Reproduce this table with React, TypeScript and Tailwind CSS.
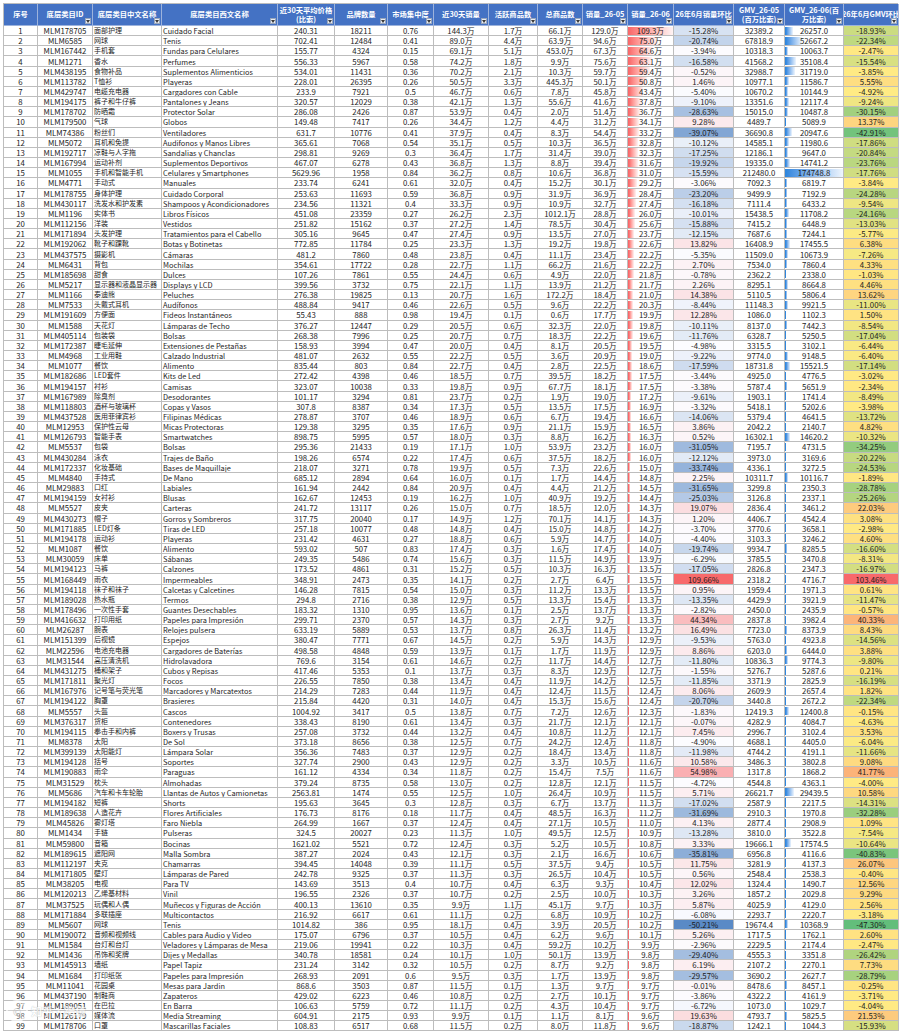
import React from "react";

const raw = `1|MLM178705|面部护理|Cuidado Facial|240.31|18211|0.76|144.3万|1.7万|66.1万|129.0万|109.3万|-15.28%|32389.2|26257.0|-18.93%
2|MLM6585|网球|Tenis|702.41|12484|0.41|89.0万|4.4万|63.9万|94.6万|75.0万|-20.74%|67818.9|52667.2|-22.34%
3|MLM167442|手机套|Fundas para Celulares|155.77|4324|0.15|69.1万|5.1万|453.0万|67.3万|64.6万|-3.94%|10318.3|10063.7|-2.47%
4|MLM1271|香水|Perfumes|556.33|5967|0.58|74.2万|1.8万|9.9万|75.6万|63.1万|-16.58%|41568.2|35108.4|-15.54%
5|MLM438195|食物补品|Suplementos Alimenticios|534.01|11431|0.36|70.2万|2.1万|10.3万|59.7万|59.4万|-0.52%|32988.7|31719.0|-3.85%
6|MLM113782|T恤衫|Playeras|228.01|26395|0.26|50.5万|3.3万|445.3万|50.1万|50.8万|1.46%|10977.1|11586.7|5.55%
7|MLM429747|电缆充电器|Cargadores con Cable|233.9|7921|0.5|46.7万|0.6万|7.8万|45.8万|43.4万|-5.40%|10670.2|10144.9|-4.92%
8|MLM194175|裤子和牛仔裤|Pantalones y Jeans|320.57|12029|0.38|42.1万|1.3万|55.6万|41.6万|37.8万|-9.10%|13351.6|12117.4|-9.24%
9|MLM178702|防晒霜|Protector Solar|286.08|2426|0.87|53.9万|0.4万|2.0万|51.4万|36.7万|-28.63%|15015.0|10487.8|-30.15%
10|MLM179500|气球|Globos|149.48|7417|0.26|34.4万|1.2万|4.4万|31.2万|34.1万|9.28%|4489.7|5089.9|13.37%
11|MLM74386|粉丝们|Ventiladores|631.7|10776|0.41|37.9万|0.4万|8.3万|54.4万|33.2万|-39.07%|36690.8|20947.6|-42.91%
12|MLM5072|耳机和免提|Audifonos y Manos Libres|365.61|7068|0.54|35.1万|0.5万|10.3万|36.5万|32.8万|-10.12%|14585.1|11980.6|-17.86%
13|MLM192717|凉鞋与人字拖|Sandalias y Chanclas|298.81|9269|0.3|36.4万|1.7万|31.4万|39.0万|32.3万|-17.25%|12186.1|9647.0|-20.84%
14|MLM167994|运动补剂|Suplementos Deportivos|467.07|6278|0.43|36.8万|1.3万|8.8万|39.4万|31.6万|-19.92%|19335.0|14741.2|-23.76%
15|MLM1055|手机和智能手机|Celulares y Smartphones|5629.96|1958|0.84|36.2万|0.8万|10.6万|36.8万|31.0万|-15.59%|212480.0|174748.8|-17.76%
16|MLM4771|手动式|Manuales|233.74|6241|0.61|32.0万|0.4万|15.2万|30.1万|29.2万|-3.06%|7092.3|6819.7|-3.84%
17|MLM178755|身体护理|Cuidado Corporal|253.63|11693|0.59|36.8万|0.9万|31.9万|36.9万|28.4万|-23.20%|9499.9|7192.9|-24.28%
18|MLM430117|洗发水和护发素|Shampoos y Acondicionadores|234.56|11321|0.4|33.3万|0.9万|10.9万|32.7万|27.4万|-16.18%|7111.4|6433.2|-9.54%
19|MLM1196|实体书|Libros Físicos|451.08|23359|0.27|26.2万|2.3万|1012.1万|28.8万|26.0万|-10.01%|15438.5|11708.2|-24.16%
20|MLM112156|洋装|Vestidos|251.82|15162|0.37|27.2万|1.4万|78.5万|30.4万|25.6万|-15.88%|7415.2|6448.9|-13.03%
21|MLM171894|头发护理|Tratamientos para el Cabello|305.16|9645|0.47|27.4万|0.9万|13.5万|27.0万|23.7万|-12.15%|7687.6|7244.1|-5.77%
22|MLM192062|靴子和踝靴|Botas y Botinetas|772.85|11784|0.25|23.3万|1.3万|19.2万|19.8万|22.6万|13.82%|16408.9|17455.5|6.38%
23|MLM437575|摄影机|Cámaras|481.2|7860|0.48|23.8万|0.4万|11.1万|23.4万|22.2万|-5.35%|11509.0|10673.9|-7.26%
24|MLM6431|背包|Mochilas|354.61|17722|0.28|22.7万|1.1万|66.2万|21.6万|22.2万|2.70%|7534.0|7860.4|4.33%
25|MLM185698|甜食|Dulces|107.26|7861|0.55|24.4万|0.6万|4.9万|22.0万|21.8万|-0.78%|2362.2|2338.0|-1.03%
26|MLM5217|显示器和液晶显示器|Displays y LCD|399.56|3732|0.75|22.1万|1.1万|13.9万|21.2万|21.7万|2.26%|8295.1|8664.8|4.46%
27|MLM1166|泰迪熊|Peluches|276.38|19825|0.13|20.7万|1.6万|172.2万|18.4万|21.0万|14.38%|5110.5|5806.4|13.62%
28|MLM7533|头戴式耳机|Audífonos|488.84|9417|0.46|22.6万|0.5万|9.6万|22.2万|20.3万|-8.44%|11148.3|9921.5|-11.00%
29|MLM191609|方便面|Fideos Instantáneos|55.43|888|0.98|19.4万|0.1万|0.6万|17.7万|19.9万|12.28%|1086.0|1102.3|1.50%
30|MLM1588|天花灯|Lámparas de Techo|376.27|12447|0.29|20.5万|0.6万|32.3万|22.0万|19.8万|-10.11%|8137.0|7442.3|-8.54%
31|MLM405114|包装袋|Bolsas|268.38|7996|0.25|20.7万|0.7万|18.3万|22.2万|19.6万|-11.76%|6328.7|5250.5|-17.04%
32|MLM172387|睫毛延伸|Extensiones de Pestañas|158.93|3994|0.47|20.0万|0.4万|8.1万|20.5万|19.5万|-4.98%|3315.5|3102.1|-6.44%
33|MLM4968|工业用鞋|Calzado Industrial|481.07|2632|0.55|22.2万|0.5万|3.6万|20.9万|19.0万|-9.22%|9774.0|9148.5|-6.40%
34|MLM1077|餐饮|Alimento|835.44|803|0.84|22.7万|0.4万|2.8万|22.5万|18.6万|-17.59%|18731.8|15521.5|-17.14%
35|MLM182686|LED套件|Kits de Led|272.42|4398|0.46|18.5万|0.7万|39.5万|18.2万|17.5万|-3.44%|4925.0|4776.5|-3.02%
36|MLM194157|衬衫|Camisas|323.07|10038|0.33|19.8万|0.9万|67.7万|18.1万|17.5万|-3.38%|5787.4|5651.9|-2.34%
37|MLM167989|除臭剂|Desodorantes|101.17|3294|0.81|23.7万|0.2万|1.9万|19.0万|17.2万|-9.61%|1903.1|1741.4|-8.49%
38|MLM118803|酒杯与玻璃杯|Copas y Vasos|307.8|8387|0.34|17.3万|0.5万|13.5万|17.5万|16.9万|-3.32%|5418.1|5202.6|-3.98%
39|MLM437528|医用菲律宾衫|Filipinas Médicas|278.87|3707|0.46|18.9万|0.6万|6.7万|19.4万|16.6万|-14.06%|5379.4|4641.5|-13.72%
40|MLM12953|保护性云母|Micas Protectoras|129.38|3295|0.35|17.6万|0.9万|21.1万|15.9万|16.5万|3.86%|2042.2|2140.7|4.82%
41|MLM126793|智能手表|Smartwatches|898.75|5995|0.57|18.0万|0.3万|8.8万|16.2万|16.3万|0.52%|16302.1|14620.2|-10.32%
42|MLM5537|包袋|Bolsas|295.36|21433|0.19|17.1万|1.0万|53.9万|23.2万|16.0万|-31.05%|7195.7|4731.5|-34.25%
43|MLM430284|泳衣|Trajes de Baño|198.26|6574|0.22|17.4万|0.6万|37.5万|18.2万|16.0万|-12.12%|3973.0|3169.6|-20.22%
44|MLM172337|化妆基础|Bases de Maquillaje|218.07|3271|0.78|19.9万|0.5万|7.3万|22.6万|15.0万|-33.74%|4336.1|3272.5|-24.53%
45|MLM4840|手持式|De Mano|685.12|2894|0.64|16.0万|0.1万|1.7万|14.4万|14.8万|2.25%|10311.7|10116.7|-1.89%
46|MLM29883|口红|Labiales|161.94|2442|0.84|20.9万|0.4万|4.4万|21.2万|14.5万|-31.65%|3299.8|2350.3|-28.78%
47|MLM194159|女衬衫|Blusas|162.67|12453|0.19|16.2万|1.0万|40.9万|19.2万|14.4万|-25.03%|3126.8|2337.1|-25.26%
48|MLM5527|皮夹|Carteras|241.72|13117|0.26|15.0万|0.7万|18.5万|12.0万|14.3万|19.07%|2836.4|3461.2|22.03%
49|MLM430273|帽子|Gorros y Sombreros|317.75|20040|0.17|14.9万|1.2万|70.1万|14.1万|14.3万|1.20%|4406.7|4542.4|3.08%
50|MLM171885|LED灯条|Tiras de LED|257.18|10077|0.48|14.8万|0.4万|15.0万|14.8万|14.2万|-3.70%|3770.6|3658.1|-2.98%
51|MLM194178|运动衫|Playeras|231.42|4631|0.27|18.8万|0.6万|5.9万|14.7万|14.0万|-4.40%|3103.3|3246.2|4.60%
52|MLM1087|餐饮|Alimento|593.02|507|0.83|17.4万|0.3万|1.6万|17.4万|14.0万|-19.74%|9934.7|8285.5|-16.60%
53|MLM30059|床单|Sábanas|249.35|5486|0.74|15.6万|0.3万|11.5万|14.9万|13.9万|-6.29%|3785.5|3470.8|-8.31%
54|MLM194123|马裤|Calzones|173.52|4861|0.31|15.2万|0.5万|10.3万|16.3万|13.5万|-17.05%|2826.8|2347.3|-16.97%
55|MLM168449|雨衣|Impermeables|348.91|2473|0.35|14.1万|0.2万|2.7万|6.4万|13.5万|109.66%|2318.2|4716.7|103.46%
56|MLM194118|袜子和袜子|Calcetas y Calcetines|146.28|7815|0.54|15.0万|0.3万|11.2万|13.3万|13.5万|0.95%|1959.4|1971.3|0.61%
57|MLM189028|热水瓶|Termos|294.8|2716|0.38|12.9万|0.5万|13.3万|15.4万|13.3万|-13.35%|4429.9|3921.9|-11.47%
58|MLM178496|一次性手套|Guantes Desechables|183.32|1310|0.95|13.6万|0.1万|2.5万|13.7万|13.3万|-2.82%|2450.0|2435.9|-0.57%
59|MLM416632|打印用纸|Papeles para Impresión|299.71|2370|0.57|14.3万|0.3万|2.7万|9.2万|13.3万|44.34%|2837.8|3982.4|40.33%
60|MLM26287|腕表|Relojes pulsera|633.19|5889|0.53|13.7万|0.8万|26.3万|11.4万|13.2万|16.49%|7723.0|8373.9|8.43%
61|MLM151399|后视镜|Espejos|380.47|7771|0.67|14.5万|0.2万|5.9万|14.3万|12.9万|-9.53%|5763.0|4923.8|-14.56%
62|MLM22596|电池充电器|Cargadores de Baterías|498.58|4848|0.59|13.9万|0.1万|1.7万|11.9万|12.9万|8.86%|6203.0|6444.0|3.88%
63|MLM31544|高压清洗机|Hidrolavadora|769.6|3154|0.61|14.6万|0.2万|11.7万|14.4万|12.7万|-11.80%|10836.3|9774.3|-9.80%
64|MLM431275|桶和架子|Cubos y Repisas|417.46|5353|0.1|13.7万|0.3万|8.3万|12.9万|12.7万|-1.55%|5276.7|5287.6|0.21%
65|MLM171811|聚光灯|Focos|226.55|7850|0.38|13.4万|0.4万|11.9万|14.2万|12.5万|-11.85%|3371.9|2825.9|-16.19%
66|MLM167976|记号笔与荧光笔|Marcadores y Marcatextos|214.29|7283|0.44|11.9万|0.4万|12.4万|11.5万|12.4万|8.06%|2609.9|2657.4|1.82%
67|MLM194122|胸罩|Brasieres|215.84|4420|0.31|14.0万|0.4万|15.3万|15.6万|12.4万|-20.70%|3440.8|2672.2|-22.34%
68|MLM5557|头盔|Cascos|1004.92|3417|0.5|13.8万|0.7万|7.2万|12.6万|12.3万|-1.83%|12419.3|12400.8|-0.15%
69|MLM376317|货柜|Contenedores|338.43|8190|0.61|13.4万|0.3万|21.7万|12.1万|12.1万|-0.07%|4282.9|4084.7|-4.63%
70|MLM194115|拳击手和内裤|Boxers y Trusas|257.08|3732|0.44|13.2万|0.4万|10.8万|11.2万|12.1万|7.45%|2996.7|3102.4|3.53%
71|MLM8378|太阳|De Sol|373.18|8656|0.38|12.5万|0.7万|24.2万|12.4万|11.8万|-4.90%|4688.1|4405.0|-6.04%
72|MLM399139|太阳能灯|Lámpara Solar|356.36|7483|0.37|12.9万|0.2万|18.4万|13.4万|11.8万|-11.98%|4744.2|4191.1|-11.66%
73|MLM194128|括号|Soportes|327.74|2900|0.43|12.9万|0.2万|3.3万|10.5万|11.6万|10.58%|3486.3|3802.8|9.08%
74|MLM190883|雨伞|Paraguas|161.12|4334|0.34|11.8万|0.2万|15.4万|7.5万|11.6万|54.98%|1317.8|1868.2|41.77%
75|MLM31529|枕头|Almohadas|379.24|8735|0.58|13.0万|0.2万|12.8万|12.1万|11.5万|-4.72%|4544.8|4363.1|-4.00%
76|MLM5686|汽车和卡车轮胎|Llantas de Autos y Camionetas|2563.81|1474|0.55|12.5万|1.0万|26.4万|10.9万|11.5万|5.71%|26621.7|29439.5|10.58%
77|MLM194182|短裤|Shorts|195.63|3645|0.3|12.8万|0.3万|6.7万|13.7万|11.3万|-17.02%|2587.9|2217.5|-14.31%
78|MLM189638|人造花卉|Flores Artificiales|176.73|8176|0.18|11.7万|0.4万|48.5万|16.3万|11.2万|-31.69%|2910.3|1970.8|-32.28%
79|MLM45826|雾灯塔|Faro Niebla|264.99|1667|0.37|12.4万|0.4万|27.1万|10.5万|11.0万|4.13%|2877.4|2908.9|1.09%
80|MLM1434|手链|Pulseras|324.5|20027|0.23|11.3万|1.0万|49.5万|12.5万|10.9万|-13.28%|3810.0|3522.8|-7.54%
81|MLM59800|音箱|Bocinas|1621.02|5521|0.72|12.4万|0.3万|5.2万|10.5万|10.8万|3.33%|19666.1|17574.5|-10.64%
82|MLM189615|遮阳网|Malla Sombra|387.27|2024|0.43|12.1万|0.3万|2.1万|16.6万|10.6万|-35.81%|6956.8|4116.6|-40.83%
83|MLM112197|夹克|Chamarras|394.45|14048|0.39|11.1万|0.5万|37.5万|9.4万|10.5万|11.75%|3281.9|4137.3|26.07%
84|MLM171805|壁灯|Lámparas de Pared|242.78|9325|0.37|11.3万|0.3万|26.5万|10.4万|10.5万|0.56%|2548.4|2538.3|-0.40%
85|MLM38205|电视|Para TV|143.69|3513|0.4|10.7万|0.4万|6.3万|9.3万|10.4万|12.02%|1324.4|1490.7|12.56%
86|MLM120213|乙烯基材料|Vinil|196.55|2326|0.37|10.7万|0.2万|2.5万|10.0万|10.3万|3.26%|1857.2|2029.8|9.29%
87|MLM37525|玩偶和人偶|Muñecos y Figuras de Acción|400.13|13610|0.35|9.9万|1.1万|45.1万|9.7万|10.3万|5.87%|4025.9|4129.0|2.56%
88|MLM171884|多联插座|Multicontactos|216.92|6617|0.61|11.1万|0.2万|6.8万|10.9万|10.2万|-6.08%|2293.7|2220.7|-3.18%
89|MLM5607|网球|Tenis|1014.82|386|0.95|18.1万|0.4万|3.9万|20.5万|10.2万|-50.21%|19674.4|10368.9|-47.30%
90|MLM190072|音频和视频线|Cables para Audio y Video|175.07|6796|0.37|10.5万|0.4万|6.2万|9.6万|10.1万|5.26%|1717.5|1762.1|2.60%
91|MLM1584|台灯和台灯|Veladores y Lámparas de Mesa|219.06|19941|0.22|10.3万|0.4万|59.2万|10.2万|9.9万|-2.96%|2229.5|2174.4|-2.47%
92|MLM1436|吊饰和奖牌|Dijes y Medallas|340.78|18581|0.24|10.1万|1.0万|50.1万|13.9万|9.8万|-29.40%|4555.3|3351.8|-26.42%
93|MLM145913|墙纸|Papel Tapiz|231.24|3142|0.32|10.5万|0.2万|8.7万|9.2万|9.8万|6.19%|2107.2|2270.1|7.73%
94|MLM1684|打印纸张|Papeles para Impresión|268.93|2091|0.6|9.5万|0.3万|1.7万|13.9万|9.8万|-29.57%|3690.2|2627.7|-28.79%
95|MLM11041|花园桌|Mesas para Jardin|868.6|3503|0.87|11.5万|0.1万|1.3万|9.7万|9.7万|-0.01%|8478.6|8457.1|-0.25%
96|MLM437190|制鞋商|Zapateros|429.02|6223|0.46|10.8万|0.2万|2.7万|10.1万|9.7万|-3.86%|4322.2|4161.9|-3.71%
97|MLM189051|在巴拉|En Barra|106.63|5759|0.72|11.1万|0.2万|4.3万|10.4万|9.7万|-6.72%|1073.0|1029.7|-4.04%
98|MLM126179|媒体流|Media Streaming|604.91|2175|0.93|9.9万|0.1万|1.1万|8.1万|9.6万|19.63%|4793.7|5825.5|21.53%
99|MLM178706|口罩|Mascarillas Faciales|108.83|6517|0.68|11.5万|0.2万|8.0万|11.8万|9.6万|-18.87%|1242.1|1044.3|-15.93%`;

const rows = raw.split("\n").map((l) => l.split("|"));

const num = (s: string) => parseFloat(s.replace("%", "").replace("万", ""));

function median(a: number[]) {
  const s = [...a].sort((x, y) => x - y);
  const m = Math.floor(s.length / 2);
  return s.length % 2 ? s[m] : (s[m - 1] + s[m]) / 2;
}

type RGB = [number, number, number];
const hex = (h: string): RGB => [parseInt(h.slice(1, 3), 16), parseInt(h.slice(3, 5), 16), parseInt(h.slice(5, 7), 16)];
const mix = (a: RGB, b: RGB, t: number) => {
  const c = a.map((v, i) => Math.round(v + (b[i] - v) * Math.max(0, Math.min(1, t))));
  return `rgb(${c[0]},${c[1]},${c[2]})`;
};

function scale3(v: number, min: number, mid: number, max: number, lo: string, md: string, hi: string) {
  if (v <= mid) return mix(hex(md), hex(lo), (mid - v) / (mid - min));
  return mix(hex(md), hex(hi), (v - mid) / (max - mid));
}

const salesChg = rows.map((r) => num(r[12]));
const gmvChg = rows.map((r) => num(r[15]));
const sales06 = rows.map((r) => num(r[11]));
const gmv06 = rows.map((r) => num(r[14]));

const sc = { min: Math.min(...salesChg), max: Math.max(...salesChg), mid: median(salesChg) };
const gc = { min: Math.min(...gmvChg), max: Math.max(...gmvChg), mid: median(gmvChg) };
const s6 = { min: Math.min(...sales06), max: Math.max(...sales06) };
const g6 = { min: Math.min(...gmv06), max: Math.max(...gmv06) };

const headers: { t: string[]; filter: boolean }[] = [
  { t: ["序号"], filter: false },
  { t: ["底层类目ID"], filter: true },
  { t: ["底层类目中文名称"], filter: true },
  { t: ["底层类目西文名称"], filter: true },
  { t: ["近30天平均价格", "(比索)"], filter: true },
  { t: ["品牌数量"], filter: true },
  { t: ["市场集中度"], filter: true },
  { t: ["近30天销量"], filter: true },
  { t: ["活跃商品数"], filter: true },
  { t: ["总商品数"], filter: true },
  { t: ["销量_26-05"], filter: true },
  { t: ["销量_26-06"], filter: true },
  { t: ["26年6月销量环比"], filter: true },
  { t: ["GMV_26-05", "(百万比索)"], filter: true },
  { t: ["GMV_26-06(百", "万比索)"], filter: true },
  { t: ["26年6月GMV环比"], filter: true },
];

const gridCols =
  "grid grid-cols-[34px_55px_69px_116px_57px_53px_46px_55px_49px_45px_45px_46px_60px_51px_59px_55px]";

function FilterBtn() {
  return (
    <div className="absolute right-[1px] bottom-[1px] w-[6px] h-[6px] bg-[#E9EDF4] border border-[#9AA7BC] flex items-center justify-center">
      <svg width="4" height="3" viewBox="0 0 4 3">
        <path d="M0 0 L4 0 L2 3 Z" fill="#3A3A3A" />
      </svg>
    </div>
  );
}

const cellBase =
  "relative h-[10.17px] border-r border-b border-[#BDBDBD] overflow-hidden whitespace-nowrap flex items-center leading-[9px]";

export default function App() {
  return (
    <div className="relative w-[900px] h-[1036px] bg-white pt-[3px] pl-[3px] font-['Noto_Sans_CJK_SC','Noto_Sans',sans-serif] text-[7.8px] text-[#1c1c1c]">
      <div className="w-[895px] border-l border-t border-[#BDBDBD]">
        <div className={`${gridCols} h-[22px] bg-[#4472C4]`}>
          {headers.map((h, i) => (
            <div
              key={i}
              className="relative h-[22px] border-r border-b border-[#9DB3DC] overflow-hidden flex flex-col items-center justify-center text-white font-bold text-[7.3px] leading-[9px] whitespace-nowrap"
            >
              {h.t.map((l, j) => (
                <div key={j} className="flex justify-center w-full">
                  <span>{l}</span>
                </div>
              ))}
              {h.filter && <FilterBtn />}
            </div>
          ))}
        </div>
        {rows.map((r, ri) => {
          const sv = sales06[ri];
          const sw = Math.max(2, ((sv - s6.min) / (s6.max - s6.min)) * 100);
          const gv = gmv06[ri];
          const gw = Math.max(2, ((gv - g6.min) / (g6.max - g6.min)) * 100);
          return (
            <div key={ri} className={gridCols}>
              <div className={`${cellBase} justify-center`}>{r[0]}</div>
              <div className={`${cellBase} justify-center`}>{r[1]}</div>
              <div className={`${cellBase} justify-start pl-[1px] text-[7px]`}>{r[2]}</div>
              <div className={`${cellBase} justify-start pl-[1px] text-[7.4px]`}>{r[3]}</div>
              <div className={`${cellBase} justify-center`}>{r[4]}</div>
              <div className={`${cellBase} justify-center`}>{r[5]}</div>
              <div className={`${cellBase} justify-center`}>{r[6]}</div>
              <div className={`${cellBase} justify-center`}>{r[7]}</div>
              <div className={`${cellBase} justify-center`}>{r[8]}</div>
              <div className={`${cellBase} justify-center`}>{r[9]}</div>
              <div className={`${cellBase} justify-center`}>{r[10]}</div>
              <div className={`${cellBase} justify-center`}>
                <div
                  className="absolute left-0 top-[0.5px] bottom-[0.5px] bg-linear-to-r from-[#F8696B] to-[#FFF4F4] border-l border-[#F8696B]"
                  style={{ width: `${sw}%` }}
                />
                <span className="relative">{r[11]}</span>
              </div>
              <div
                className={`${cellBase} justify-center`}
                style={{ backgroundColor: scale3(salesChg[ri], sc.min, sc.mid, sc.max, "#5A8AC6", "#FCFCFF", "#F8696B") }}
              >
                {r[12]}
              </div>
              <div className={`${cellBase} justify-center`}>{r[13]}</div>
              <div className={`${cellBase} justify-center`}>
                <div
                  className="absolute left-0 top-[0.5px] bottom-[0.5px] bg-linear-to-r from-[#2F86DD] to-[#EEF5FD] border-l border-[#2F86DD]"
                  style={{ width: `${gw}%` }}
                />
                <span className="relative">{r[14]}</span>
              </div>
              <div
                className={`${cellBase} justify-center`}
                style={{ backgroundColor: scale3(gmvChg[ri], gc.min, gc.mid, gc.max, "#63BE7B", "#FFEB84", "#F8696B") }}
              >
                {r[15]}
              </div>
            </div>
          );
        })}
      </div>
      <div className="absolute left-[6px] top-[1000px] flex items-center gap-[3px] opacity-70 pointer-events-none">
        <div className="w-[22px] h-[22px] rounded-full border-2 border-white bg-white/40 flex items-center justify-center text-[#c8c8c8] text-[10px] font-bold">
          ©
        </div>
        <div className="text-white text-[11px] font-bold [text-shadow:0_0_1px_#999]">知乎·跨境</div>
      </div>
    </div>
  );
}
